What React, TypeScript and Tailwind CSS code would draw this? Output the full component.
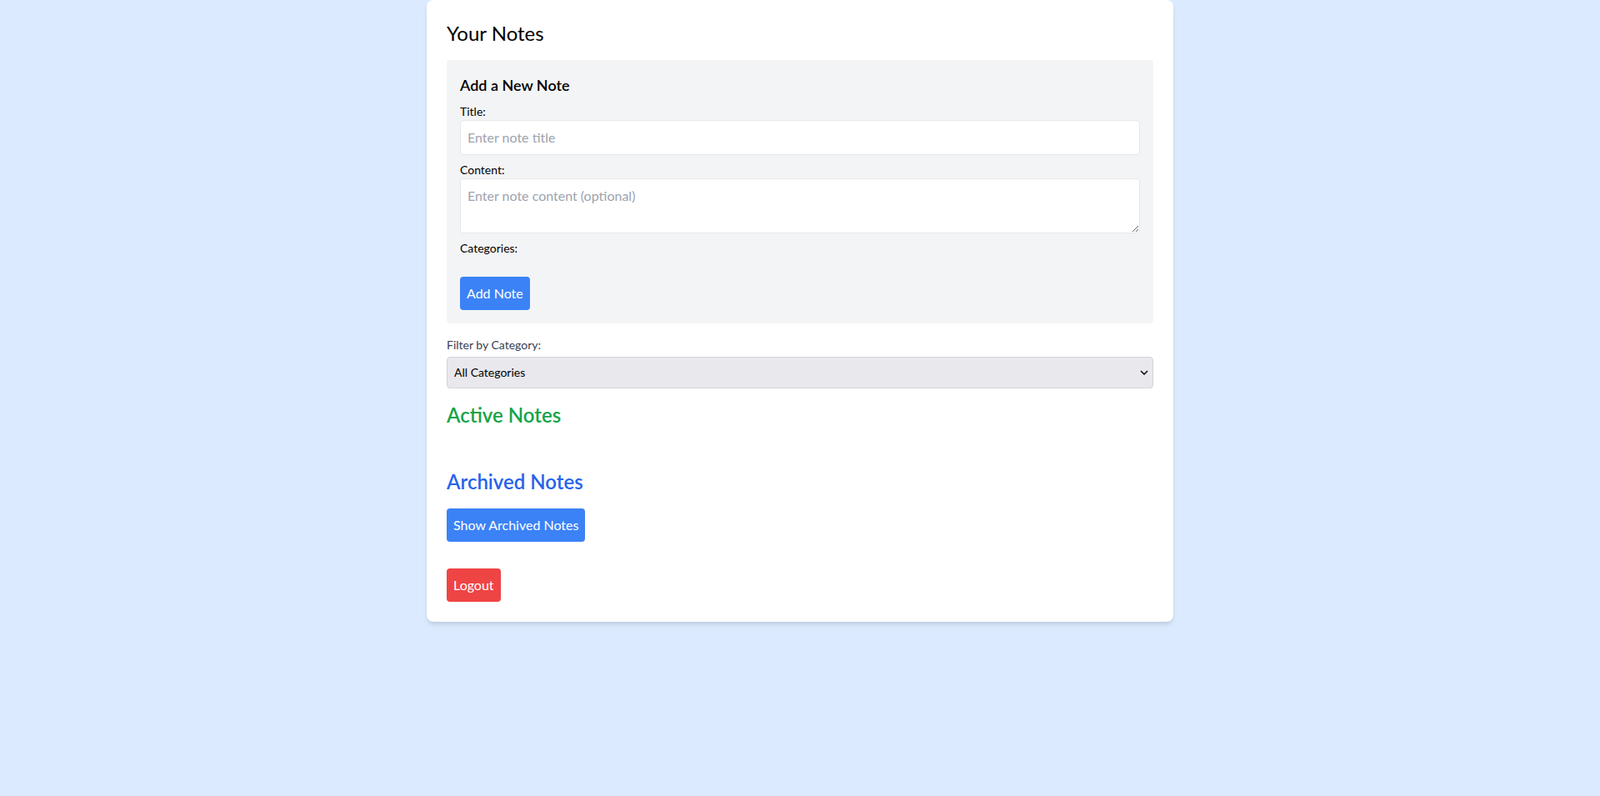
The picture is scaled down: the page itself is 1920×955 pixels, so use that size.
import React, { useState } from 'react';

const App: React.FC = () => {
  const [title, setTitle] = useState('');
  const [content, setContent] = useState('');
  const [filter, setFilter] = useState('');

  return (
    <div className="min-h-screen bg-[#dbeafe] font-['Segoe_UI','Lato','Noto_Sans',sans-serif] text-black">
      <div className="mx-auto max-w-4xl rounded-lg bg-white p-6 shadow-md">
        <h1 className="mb-4 text-2xl">Your Notes</h1>

        {/* Add note form */}
        <form className="mb-4 rounded bg-[#f3f4f6] p-4" onSubmit={(e) => e.preventDefault()}>
          <h2 className="mb-2 text-lg font-semibold">Add a New Note</h2>
          <div className="mb-2">
            <label className="block text-sm font-normal">Title:</label>
            <input
              type="text"
              value={title}
              onChange={(e) => setTitle(e.target.value)}
              placeholder="Enter note title"
              className="w-full rounded border border-[#e5e7eb] bg-white p-2 text-base placeholder:text-[#9ca3af] focus:outline-none"
            />
          </div>
          <div className="mb-2">
            <label className="block text-sm font-normal">Content:</label>
            <textarea
              value={content}
              onChange={(e) => setContent(e.target.value)}
              placeholder="Enter note content (optional)"
              rows={2}
              className="block w-full rounded border border-[#e5e7eb] bg-white p-2 text-base placeholder:text-[#9ca3af] focus:outline-none"
            />
          </div>
          <div className="mb-6">
            <label className="block text-sm font-normal">Categories:</label>
          </div>
          <button type="submit" className="rounded bg-[#3b82f6] p-2 text-white">
            Add Note
          </button>
        </form>

        {/* Filter */}
        <div className="mb-4">
          <label className="mb-1 block text-sm text-[#374151]">Filter by Category:</label>
          <div className="relative">
            <select
              value={filter}
              onChange={(e) => setFilter(e.target.value)}
              className="w-full appearance-none rounded border border-[#d1d5db] bg-[#e9e8ed] p-2 text-sm"
            >
              <option value="">All Categories</option>
            </select>
            <svg
              viewBox="0 0 10 6"
              className="pointer-events-none absolute right-[6px] top-1/2 h-[6px] w-[10px] -translate-y-1/2"
              fill="none"
              stroke="#111"
              strokeWidth="1.6"
            >
              <path d="M1 1 L5 5 L9 1" />
            </svg>
          </div>
        </div>

        <h2 className="mb-4 text-2xl font-semibold text-[#16a34a]">Active Notes</h2>
        <ul className="mb-12"></ul>

        <h2 className="mb-4 text-2xl font-semibold text-[#2563eb]">Archived Notes</h2>
        <button className="rounded bg-[#3b82f6] p-2 text-white">Show Archived Notes</button>

        <div className="mt-8">
          <button className="rounded bg-[#ef4444] p-2 text-white">Logout</button>
        </div>
      </div>
    </div>
  );
};

export default App;
